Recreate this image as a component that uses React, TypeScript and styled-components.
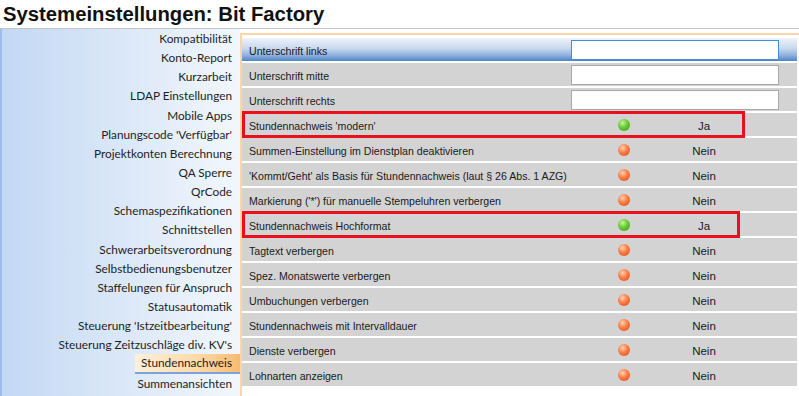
import React from 'react';
import styled, { createGlobalStyle } from 'styled-components';

const GlobalStyle = createGlobalStyle`
  html, body {
    margin: 0;
    padding: 0;
    background: #ffffff;
  }
  #root {
    width: 799px;
    height: 396px;
    overflow: hidden;
  }
`;

const Page = styled.div`
  display: flex;
  flex-direction: column;
  width: 799px;
  height: 396px;
  background: #ffffff;
`;

const TitleBar = styled.div`
  height: 28px;
  flex: none;
  display: flex;
  align-items: center;
  padding-left: 3px;
  border-bottom: 1px solid #c4c4c4;
  font-family: 'Liberation Sans', Arial, sans-serif;
  font-weight: bold;
  font-size: 20.3px;
  color: #111111;
`;

const Main = styled.div`
  flex: 1;
  display: flex;
  min-height: 0;
`;

const Nav = styled.div`
  width: 236px;
  flex: none;
  display: flex;
  flex-direction: column;
  align-items: flex-end;
  padding-right: 2px;
  border-left: 2px solid #9cbde8;
  background: linear-gradient(to right, #c3d8f4 0%, #dde9f8 55%, #f2f7fd 100%);
  font-family: Lato, 'Noto Sans', sans-serif;
  font-size: 11.8px;
  color: #1e1e1e;
`;

const NavItem = styled.div<{ $active?: boolean }>`
  height: 19.15px;
  line-height: 19px;
  padding: 0 6px 0 6px;
  white-space: nowrap;
  box-sizing: border-box;
  ${p =>
    p.$active &&
    `
    background: linear-gradient(to right, #fdf0dc 0%, #fcd9a6 60%, #f7bb72 100%);
    border-bottom: 2px solid #7aa2dc;
    line-height: 18px;
    padding-left: 6px;
    margin-right: -2px;
    padding-right: 8px;
  `}
`;

const Panel = styled.div`
  flex: 1;
  display: flex;
  flex-direction: column;
  margin-top: 4px;
  border-top: 2px solid #fbd7a8;
  border-left: 2px solid #fbd7a8;
  padding-top: 3px;
  background: #ffffff;
`;

const Row = styled.div<{ $selected?: boolean }>`
  position: relative;
  display: grid;
  grid-template-columns: 329px 1fr;
  align-items: center;
  height: 23px;
  margin-bottom: 2px;
  margin-right: 2px;
  background: ${p =>
    p.$selected
      ? 'linear-gradient(to bottom, #eef3fa 0%, #c9d9ee 45%, #8fb1dd 75%, #4d84c6 100%)'
      : '#d3d3d3'};
  font-family: 'Liberation Sans', Arial, sans-serif;
  font-size: 10.6px;
  color: #1a1a1a;
`;

const Label = styled.div`
  padding-left: 7px;
  padding-top: 2px;
  white-space: nowrap;
`;

const TextInput = styled.div<{ $focused?: boolean }>`
  width: 208px;
  height: 20px;
  box-sizing: border-box;
  background: #ffffff;
  border: 1px solid ${p => (p.$focused ? '#3d8ee0' : '#a8a8a8')};
`;

const ToggleCell = styled.div`
  display: flex;
  align-items: center;
`;

const Dot = styled.span<{ $on: boolean }>`
  width: 12px;
  height: 12px;
  margin-left: 47px;
  border-radius: 50%;
  background: ${p =>
    p.$on
      ? 'radial-gradient(circle at 38% 32%, #c8f5a0 0%, #6fce3a 40%, #34960e 100%)'
      : 'radial-gradient(circle at 38% 32%, #ffd2b8 0%, #ff8047 42%, #db4612 100%)'};
`;

const ToggleText = styled.span`
  width: 50px;
  margin-left: 49px;
  padding-top: 3px;
  text-align: center;
  font-size: 11.5px;
`;

const Highlight = styled.div<{ $width: number }>`
  position: absolute;
  left: 0;
  top: -2px;
  bottom: -2px;
  width: ${p => p.$width}px;
  box-sizing: border-box;
  border: 3px solid #e8101c;
  pointer-events: none;
`;

const navItems = [
  'Kompatibilität',
  'Konto-Report',
  'Kurzarbeit',
  'LDAP Einstellungen',
  'Mobile Apps',
  "Planungscode 'Verfügbar'",
  'Projektkonten Berechnung',
  'QA Sperre',
  'QrCode',
  'Schemaspezifikationen',
  'Schnittstellen',
  'Schwerarbeitsverordnung',
  'Selbstbedienungsbenutzer',
  'Staffelungen für Anspruch',
  'Statusautomatik',
  "Steuerung 'Istzeitbearbeitung'",
  "Steuerung Zeitzuschläge div. KV's",
  'Stundennachweis',
  'Summenansichten',
];

type Setting =
  | { label: string; kind: 'input'; selected?: boolean }
  | { label: string; kind: 'toggle'; on: boolean; mark?: number };

const settings: Setting[] = [
  { label: 'Unterschrift links', kind: 'input', selected: true },
  { label: 'Unterschrift mitte', kind: 'input' },
  { label: 'Unterschrift rechts', kind: 'input' },
  { label: "Stundennachweis 'modern'", kind: 'toggle', on: true, mark: 503 },
  { label: 'Summen-Einstellung im Dienstplan deaktivieren', kind: 'toggle', on: false },
  { label: "'Kommt/Geht' als Basis für Stundennachweis (laut § 26 Abs. 1 AZG)", kind: 'toggle', on: false },
  { label: "Markierung ('*') für manuelle Stempeluhren verbergen", kind: 'toggle', on: false },
  { label: 'Stundennachweis Hochformat', kind: 'toggle', on: true, mark: 498 },
  { label: 'Tagtext verbergen', kind: 'toggle', on: false },
  { label: 'Spez. Monatswerte verbergen', kind: 'toggle', on: false },
  { label: 'Umbuchungen verbergen', kind: 'toggle', on: false },
  { label: 'Stundennachweis mit Intervalldauer', kind: 'toggle', on: false },
  { label: 'Dienste verbergen', kind: 'toggle', on: false },
  { label: 'Lohnarten anzeigen', kind: 'toggle', on: false },
];

export default function App(): React.ReactElement {
  return (
    <Page>
      <GlobalStyle />
      <TitleBar>Systemeinstellungen: Bit Factory</TitleBar>
      <Main>
        <Nav>
          {navItems.map(item => (
            <NavItem key={item} $active={item === 'Stundennachweis'}>
              {item}
            </NavItem>
          ))}
        </Nav>
        <Panel>
          {settings.map(s => (
            <Row key={s.label} $selected={s.kind === 'input' && s.selected}>
              <Label>{s.label}</Label>
              {s.kind === 'input' ? (
                <TextInput $focused={s.selected} />
              ) : (
                <ToggleCell>
                  <Dot $on={s.on} />
                  <ToggleText>{s.on ? 'Ja' : 'Nein'}</ToggleText>
                </ToggleCell>
              )}
              {s.kind === 'toggle' && s.mark && <Highlight $width={s.mark} />}
            </Row>
          ))}
        </Panel>
      </Main>
    </Page>
  );
}
